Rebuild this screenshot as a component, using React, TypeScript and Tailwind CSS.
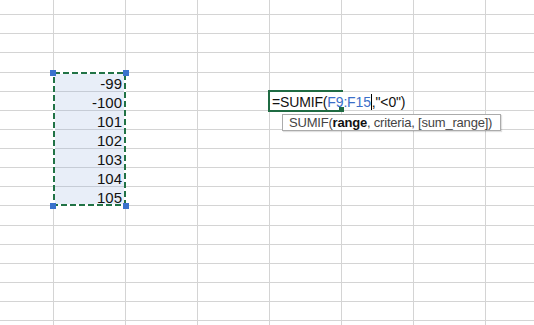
import React from 'react';

const ROW_COUNT = 18;
const COL_COUNT = 8;

// F9:F15 sits in the second visible column, rows 4..10 of this view
const values: Record<number, string> = {
  4: '-99',
  5: '-100',
  6: '101',
  7: '102',
  8: '103',
  9: '104',
  10: '105',
};

const CopyRange: React.FC = () => (
  // marching ants + the four blue range handles
  <svg className="absolute -left-[4px] -top-[4px] z-10" width="80" height="141">
    <rect x="4" y="4" width="71" height="132" fill="none" stroke="#ffffff" strokeWidth="2" />
    <rect
      x="4"
      y="4"
      width="71"
      height="132"
      fill="none"
      stroke="#217346"
      strokeWidth="2"
      strokeDasharray="6 3"
    />
    <rect x="0" y="1" width="6" height="6" fill="#3a72cc" />
    <rect x="73" y="1" width="6" height="6" fill="#3a72cc" />
    <rect x="0" y="134" width="6" height="6" fill="#3a72cc" />
    <rect x="73" y="134" width="6" height="6" fill="#3a72cc" />
  </svg>
);

const ActiveEditor: React.FC = () => (
  <>
    {/* Active cell frame */}
    <div className="absolute -left-[2px] -top-[2px] w-[75px] h-[22px] border-2 border-[#1f6b43] z-10"></div>

    {/* In-cell editor, text runs past the cell */}
    <div className="absolute left-0 top-0 h-[18px] w-[138px] bg-white flex items-end pl-[2px] z-10">
      <span className="text-[14px] leading-none tracking-[-0.15px] text-[#111] whitespace-nowrap">
        =SUMIF(<span className="text-[#3b6fc9]">F9:F15</span>
        <span className="inline-block w-px h-[16px] bg-black align-[-3px]"></span>
        ,"&lt;0")
      </span>
    </div>

    {/* Fill handle */}
    <div className="absolute left-[69px] top-[15px] w-[5px] h-[5px] bg-[#1f6b43] z-10"></div>

    {/* Function tip */}
    <div className="absolute left-[12px] top-[22px] w-[219px] h-[17px] bg-white border border-[#ababab] shadow-[1px_1px_1px_rgba(0,0,0,0.12)] flex items-center pl-[6px] z-20">
      <span className="text-[13px] leading-none tracking-[-0.2px] text-[#444] whitespace-nowrap">
        SUMIF(<span className="font-bold text-[#111]">range</span>, criteria, [sum_range])
      </span>
    </div>
  </>
);

const Cell: React.FC<{ row: number; col: number }> = ({ row, col }) => {
  const selected = col === 1 && row >= 4 && row <= 10;
  const rangeAnchor = col === 1 && row === 4;
  const active = col === 4 && row === 5;
  const lastCol = col === COL_COUNT - 1;
  const lastRow = row === ROW_COUNT - 1;

  return (
    <div
      className={[
        'flex items-end justify-end pr-[3px]',
        rangeAnchor || active ? 'relative' : '',
        lastCol ? '' : 'border-r',
        lastRow ? '' : 'border-b',
        selected ? 'bg-[#e8eef8] border-[#c6ccd6]' : 'bg-white border-[#d4d4d4]',
      ].join(' ')}
    >
      {selected && (
        <span className="text-[15px] leading-none text-[#111]">{values[row]}</span>
      )}
      {rangeAnchor && <CopyRange />}
      {active && <ActiveEditor />}
    </div>
  );
};

const App: React.FC = () => {
  const cells = [];
  for (let r = 0; r < ROW_COUNT; r++) {
    for (let c = 0; c < COL_COUNT; c++) {
      cells.push(<Cell key={`${r}-${c}`} row={r} col={c} />);
    }
  }

  return (
    <div
      className="w-[534px] h-[325px] overflow-hidden bg-white"
      style={{ fontFamily: '"Liberation Sans", Arial, sans-serif' }}
    >
      <div className="grid grid-cols-[54px_72px_72px_72px_72px_72px_72px_48px] grid-rows-[15px_19px_19px_20px_19px_19px_19px_19px_19px_19px_19px_20px_19px_19px_19px_19px_19px_5px]">
        {cells}
      </div>
    </div>
  );
};

export default App;
